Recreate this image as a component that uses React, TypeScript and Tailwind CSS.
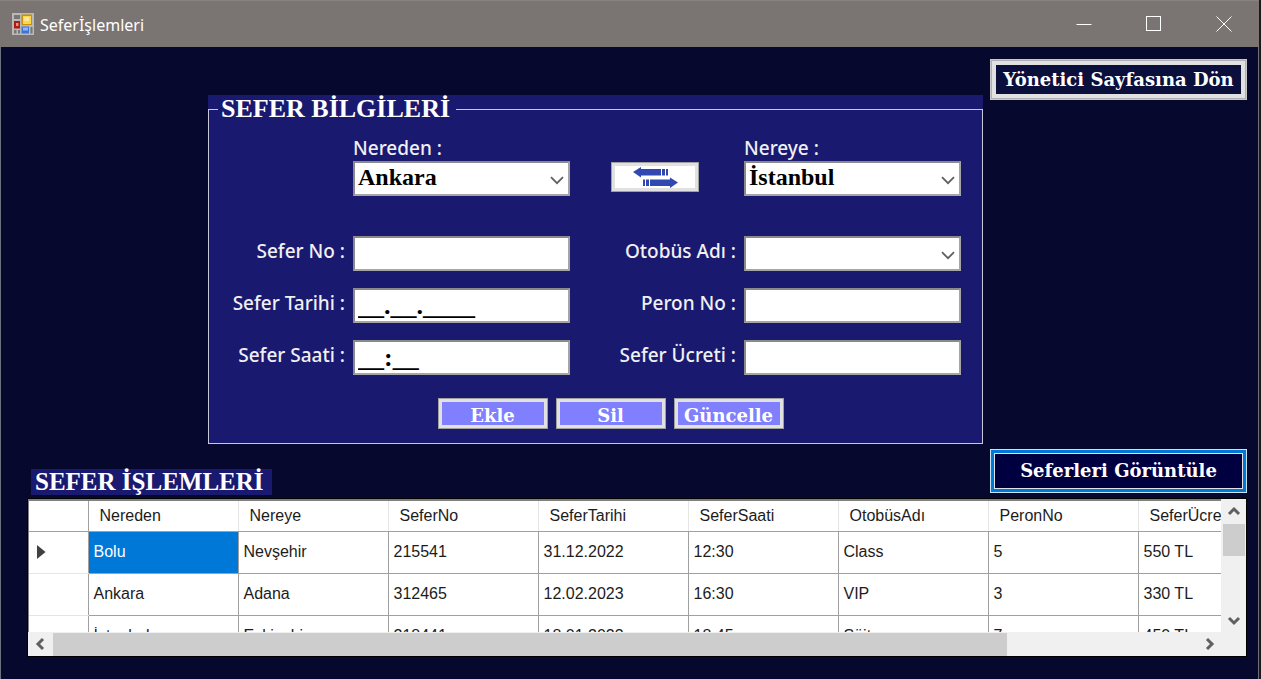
import { useState, type ReactNode } from "react";

const columns = ["Nereden", "Nereye", "SeferNo", "SeferTarihi", "SeferSaati", "OtobüsAdı", "PeronNo", "SeferÜcreti"];

const trips = [
  ["Bolu", "Nevşehir", "215541", "31.12.2022", "12:30", "Class", "5", "550 TL"],
  ["Ankara", "Adana", "312465", "12.02.2023", "16:30", "VIP", "3", "330 TL"],
  ["İstanbul", "Eskişehir", "218441", "18.01.2023", "18:45", "Süit", "7", "450 TL"],
];

const labelText = "h-6 font-['Noto_Sans',sans-serif] text-[19px] leading-[22px] font-medium text-[#f0f0f0] whitespace-nowrap";
const control =
  "h-[35px] w-full border-2 border-[#8a8a8a] border-r-[#a5a5a5] border-b-[#a5a5a5] bg-white pl-[3px] font-['Liberation_Serif',serif] leading-7 font-bold text-black outline-none";
const textControl = `${control} text-[26px]`;
const selectControl = `${control} appearance-none pb-[3px] text-2xl`;
const actionButton =
  "flex h-[31px] w-[110px] items-center justify-center border border-[#a0a0a0] bg-[#8080ff] ring-3 ring-inset ring-[#e1e1e1] pt-1 font-['DejaVu_Serif',serif] text-lg leading-5 font-bold text-white";

function Chevron({ direction }: { direction: "up" | "down" | "left" | "right" }) {
  const paths = {
    up: "M2 9 L7 4 L12 9",
    down: "M2 5 L7 10 L12 5",
    left: "M9 2 L4 7 L9 12",
    right: "M5 2 L10 7 L5 12",
  };
  return (
    <svg width="14" height="14" viewBox="0 0 14 14" fill="none" stroke="#606060" strokeWidth="3" aria-hidden="true">
      <path d={paths[direction]} />
    </svg>
  );
}

function Field({ id, label, children }: { id: string; label: string; children: ReactNode }) {
  return (
    <>
      <label htmlFor={id} className={`${labelText} mt-1 justify-self-end`}>
        {label}
      </label>
      {children}
    </>
  );
}

function ComboBox({
  id,
  value,
  options,
  onChange,
}: {
  id: string;
  value: string;
  options: string[];
  onChange: (value: string) => void;
}) {
  return (
    <div className="relative">
      <select id={id} value={value} onChange={(event) => onChange(event.target.value)} className={selectControl}>
        {options.map((option) => (
          <option key={option}>{option}</option>
        ))}
      </select>
      <svg
        className="pointer-events-none absolute top-[15px] right-1.5"
        width="14"
        height="9"
        viewBox="0 0 14 9"
        fill="none"
        stroke="#606060"
        strokeWidth="1.800"
        aria-hidden="true"
      >
        <path d="M1 1.200 L7 7.200 L13 1.200" />
      </svg>
    </div>
  );
}

function FormIcon() {
  return (
    <svg width="22" height="22" viewBox="0 0 22 22" aria-hidden="true">
      <rect width="22" height="22" fill="#b9b9b9" />
      <rect x="2" y="2" width="6" height="4" fill="#777" />
      <rect x="9.500" y="1.500" width="10.500" height="10.500" fill="#c8910c" />
      <rect x="11" y="3" width="8" height="8" fill="#ffd54a" />
      <rect x="12" y="4" width="5" height="4" fill="#ffe998" />
      <rect x="2" y="8" width="6" height="7.500" fill="#a81c14" />
      <rect x="4" y="10" width="2.500" height="3" fill="#f08a80" />
      <rect x="2" y="17" width="2.500" height="3.500" fill="#777" />
      <rect x="6" y="17" width="2" height="3.500" fill="#777" />
      <rect x="9.500" y="13.500" width="7.500" height="7" fill="#3f74d6" />
      <rect x="11" y="14.500" width="5" height="3" fill="#8fb6f5" />
      <rect x="18.500" y="14" width="2" height="6.500" fill="#777" />
    </svg>
  );
}

function TitleBar() {
  return (
    <header className="flex h-[47px] items-center bg-[#7a7473] pl-3 shadow-[inset_0_1px_0_#878180]">
      <FormIcon />
      <h1 className="ml-1.5 flex-1 pt-0.5 font-['Noto_Sans',sans-serif] text-base leading-6 text-white">
        Seferİşlemleri
      </h1>
      <div className="flex h-full">
        <button aria-label="Simge durumuna küçült" className="flex w-[70px] items-center justify-center">
          <svg width="16" height="16" viewBox="0 0 16 16" stroke="white" aria-hidden="true">
            <path d="M0.500 8.500 H15.500" />
          </svg>
        </button>
        <button aria-label="Ekranı kapla" className="flex w-[70px] items-center justify-center">
          <svg width="16" height="16" viewBox="0 0 16 16" stroke="white" fill="none" aria-hidden="true">
            <rect x="0.500" y="0.500" width="14" height="14" />
          </svg>
        </button>
        <button aria-label="Kapat" className="flex w-[70px] items-center justify-center">
          <svg width="16" height="16" viewBox="0 0 16 16" stroke="white" aria-hidden="true">
            <path d="M0.500 0.500 L15.500 15.500 M15.500 0.500 L0.500 15.500" />
          </svg>
        </button>
      </div>
    </header>
  );
}

function TripForm() {
  const cities = ["Ankara", "İstanbul", "Bolu", "Adana", "Nevşehir", "Eskişehir"];
  const [from, setFrom] = useState("Ankara");
  const [to, setTo] = useState("İstanbul");
  const [bus, setBus] = useState("");
  const swap = () => {
    setFrom(to);
    setTo(from);
  };

  return (
    <form className="mt-9 max-w-[775px] flex-1 bg-[#191970]" onSubmit={(event) => event.preventDefault()}>
      <fieldset className="border border-[#c8c8d8] px-[9px] pb-3.5">
        <legend className="pr-1.5 pl-[3px] font-['Liberation_Serif',serif] text-[26px] leading-7 font-bold text-white">
          SEFER BİLGİLERİ
        </legend>
        <div className="grid grid-cols-[127px_217px_minmax(0,1fr)_217px] gap-x-2 gap-y-[17px] pt-3.5 pr-3">
          <div className="col-start-2 mb-[23px]">
            <label htmlFor="from" className={`${labelText} block`}>
              Nereden :
            </label>
            <ComboBox id="from" value={from} options={cities} onChange={setFrom} />
          </div>
          <div className="pt-[25px] pl-[33px]">
            <button
              type="button"
              onClick={swap}
              aria-label="Nereden ve Nereye değiştir"
              className="flex h-[30px] w-[88px] items-center justify-center border border-[#a0a0a0] bg-white ring-3 ring-inset ring-[#e1e1e1]"
            >
              <svg width="45" height="21" viewBox="0 0 45 21" fill="#3148b0" aria-hidden="true">
                <path d="M0 5 L8 0 V2 H28 V8.500 H8 V10.500 Z M29 2 H32 V8.500 H29 Z M33 2 H35 V8.500 H33 Z" />
                <path d="M45 15.500 L37 10.500 V12.500 H17 V19 H37 V21 Z M13 12.500 H16 V19 H13 Z M10 12.500 H12 V19 H10 Z" />
              </svg>
            </button>
          </div>
          <div>
            <label htmlFor="to" className={`${labelText} block`}>
              Nereye :
            </label>
            <ComboBox id="to" value={to} options={cities} onChange={setTo} />
          </div>

          <Field id="trip-no" label="Sefer No :">
            <input id="trip-no" className={textControl} />
          </Field>
          <Field id="bus" label="Otobüs Adı :">
            <ComboBox id="bus" value={bus} options={["", "Class", "VIP", "Süit"]} onChange={setBus} />
          </Field>
          <Field id="date" label="Sefer Tarihi :">
            <input id="date" className={textControl} defaultValue="__.__.____" />
          </Field>
          <Field id="platform" label="Peron No :">
            <input id="platform" className={textControl} />
          </Field>
          <Field id="time" label="Sefer Saati :">
            <input id="time" className={textControl} defaultValue="__:__" />
          </Field>
          <Field id="price" label="Sefer Ücreti :">
            <input id="price" className={textControl} />
          </Field>
        </div>
        <div className="mt-[23px] flex justify-center gap-2 pl-[30px]">
          <button className={actionButton}>Ekle</button>
          <button className={actionButton}>Sil</button>
          <button className={actionButton}>Güncelle</button>
        </div>
      </fieldset>
    </form>
  );
}

function TripGrid() {
  return (
    <section className="mt-[3px] ml-[26px] grid h-[159px] grid-cols-[minmax(0,1fr)_25px] grid-rows-[minmax(0,1fr)_24px] border border-black bg-[#f0f0f0]">
      <div className="overflow-hidden border-t-2 border-l border-[#808080] bg-white">
        <table className="w-[1259px] table-fixed border-collapse font-['Liberation_Sans',sans-serif] text-base leading-5 text-[#1c1c1c]">
          <colgroup>
            <col className="w-[59px]" />
            {columns.map((column) => (
              <col key={column} className="w-[150px]" />
            ))}
          </colgroup>
          <thead>
            <tr className="h-[30px]">
              <th className="border-r border-b border-[#a0a0a0]" aria-label="Satır" />
              {columns.map((column) => (
                <th
                  key={column}
                  scope="col"
                  className="border-r border-b border-r-[#e5e5e5] border-b-[#a0a0a0] pl-[11px] text-left font-normal"
                >
                  {column}
                </th>
              ))}
            </tr>
          </thead>
          <tbody>
            {trips.map((trip, rowIndex) => (
              <tr key={trip[2]} className="h-[42px]">
                <td className="border-r border-b border-r-[#a0a0a0] border-b-[#e5e5e5] pl-2">
                  {rowIndex === 0 && (
                    <svg width="9" height="14" viewBox="0 0 9 14" fill="#404040" aria-hidden="true">
                      <path d="M0 0 L8.500 7 L0 14 Z" />
                    </svg>
                  )}
                </td>
                {trip.map((value, index) => (
                  <td
                    key={columns[index]}
                    className={
                      rowIndex === 0 && index === 0
                        ? "border border-[#a0a0a0] bg-[#0078d7] pl-[5px] text-white"
                        : "border border-[#a0a0a0] pl-[5px]"
                    }
                  >
                    {value}
                  </td>
                ))}
              </tr>
            ))}
          </tbody>
        </table>
      </div>
      <div className="flex flex-col items-center">
        <button aria-label="Yukarı kaydır" className="flex h-[25px] items-center">
          <Chevron direction="up" />
        </button>
        <div className="h-8 w-[22px] bg-[#cdcdcd]" />
        <button aria-label="Aşağı kaydır" className="mt-auto flex h-6 items-center">
          <Chevron direction="down" />
        </button>
      </div>
      <div className="flex items-center">
        <button aria-label="Sola kaydır" className="flex w-[25px] justify-center">
          <Chevron direction="left" />
        </button>
        <div className="h-[23px] w-4/5 bg-[#cdcdcd]" />
        <button aria-label="Sağa kaydır" className="ml-auto flex w-[25px] justify-center">
          <Chevron direction="right" />
        </button>
      </div>
    </section>
  );
}

export default function App() {
  return (
    <div className="flex min-h-screen flex-col border-r-2 border-[#1a1a1a] bg-[#06092d]">
      <TitleBar />
      <main className="flex-1 border-x border-[#70717f] pt-3 pr-[11px] pb-[22px]">
        <div className="flex items-start justify-end gap-[7px]">
          <TripForm />
          <button className="h-[41px] w-[257px] border border-[#c8c8c8] bg-[#0a0f3c] font-['DejaVu_Serif',serif] text-lg leading-6 font-bold whitespace-nowrap text-white shadow-[inset_0_0_0_1px_#b0b0b0,inset_0_0_0_5px_#e1e1e1]">
            Yönetici Sayfasına Dön
          </button>
        </div>
        <div className="mt-[5px] flex h-[46px] justify-between pl-[30px]">
          <h2 className="self-end bg-[#191970] pr-2 pl-1 font-['Liberation_Serif',serif] text-[25px] leading-[26px] font-bold text-white">
            SEFER İŞLEMLERİ
          </h2>
          <button className="h-11 w-[257px] border border-[#c8e4f8] bg-[#000040] font-['DejaVu_Serif',serif] text-lg leading-6 font-bold whitespace-nowrap text-white shadow-[inset_0_0_0_3px_#0078d7,inset_0_0_0_4px_#e1e1e1]">
            Seferleri Görüntüle
          </button>
        </div>
        <TripGrid />
      </main>
    </div>
  );
}
